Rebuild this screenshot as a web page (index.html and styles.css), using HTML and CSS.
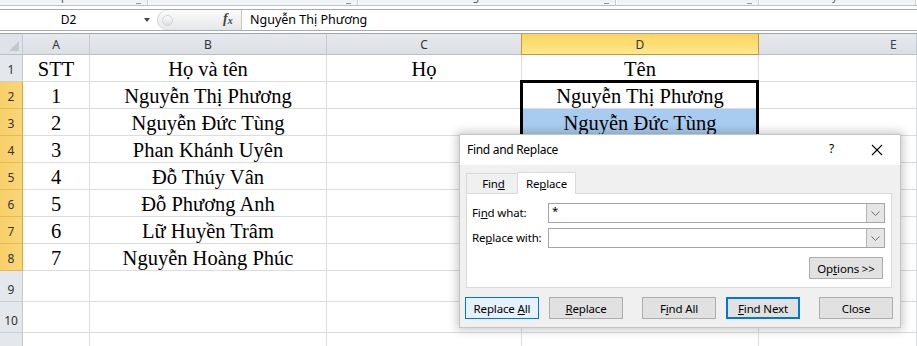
FILE: index.html
```html
<html>
<head>
<meta charset="UTF-8">
<title>Find and Replace</title>
<link rel="stylesheet" href="styles.css">
</head>
<body>

<div class="ribbon">
  <div class="group g1"><span>Clipboard</span><i class="launcher"></i></div>
  <div class="group g2"><span>Font</span><i class="launcher"></i></div>
  <div class="group g3"><span>Alignment</span><i class="launcher"></i></div>
  <div class="group g4"><span>Number</span><i class="launcher"></i></div>
  <div class="group g5"><span>Styles</span></div>
</div>

<div class="formula-bar">
  <div class="name-box"><span>D2</span><i class="caret"></i></div>
  <div class="fx-area"><span class="grip"></span><span class="fx">f<sub>x</sub></span></div>
  <div class="formula">Nguyễn Thị Phương</div>
</div>

<div class="sheet">
  <div class="corner"><i></i></div>
  <div class="ch">A</div>
  <div class="ch">B</div>
  <div class="ch">C</div>
  <div class="ch sel">D</div>
  <div class="ch e">E</div>

  <div class="rh">1</div>
  <div class="c">STT</div><div class="c">Họ và tên</div><div class="c">Họ</div><div class="c">Tên</div><div class="c"></div>

  <div class="rh sel">2</div>
  <div class="c">1</div><div class="c">Nguyễn Thị Phương</div><div class="c"></div><div class="c">Nguyễn Thị Phương</div><div class="c"></div>

  <div class="rh sel">3</div>
  <div class="c">2</div><div class="c">Nguyễn Đức Tùng</div><div class="c"></div><div class="c hl">Nguyễn Đức Tùng</div><div class="c"></div>

  <div class="rh sel">4</div>
  <div class="c">3</div><div class="c">Phan Khánh Uyên</div><div class="c"></div><div class="c hl">Phan Khánh Uyên</div><div class="c"></div>

  <div class="rh sel">5</div>
  <div class="c">4</div><div class="c">Đỗ Thúy Vân</div><div class="c"></div><div class="c hl">Đỗ Thúy Vân</div><div class="c"></div>

  <div class="rh sel">6</div>
  <div class="c">5</div><div class="c">Đỗ Phương Anh</div><div class="c"></div><div class="c hl">Đỗ Phương Anh</div><div class="c"></div>

  <div class="rh sel">7</div>
  <div class="c">6</div><div class="c">Lữ Huyền Trâm</div><div class="c"></div><div class="c hl">Lữ Huyền Trâm</div><div class="c"></div>

  <div class="rh sel">8</div>
  <div class="c">7</div><div class="c">Nguyễn Hoàng Phúc</div><div class="c"></div><div class="c hl">Nguyễn Hoàng Phúc</div><div class="c"></div>

  <div class="rh">9</div>
  <div class="c"></div><div class="c"></div><div class="c"></div><div class="c"></div><div class="c"></div>

  <div class="rh">10</div>
  <div class="c"></div><div class="c"></div><div class="c"></div><div class="c"></div><div class="c"></div>

  <div class="rh">11</div>
  <div class="c"></div><div class="c"></div><div class="c"></div><div class="c"></div><div class="c"></div>

  <div class="selection"></div>
</div>

<div class="dialog">
  <div class="dlg-title">
    <span class="dlg-name">Find and Replace</span>
    <span class="dlg-help">?</span>
    <svg class="dlg-close" width="12" height="12" viewBox="0 0 12 12"><path d="M1 1 L11 11 M11 1 L1 11" stroke="#000" stroke-width="1.1" fill="none"/></svg>
  </div>
  <div class="dlg-body">
    <div class="tabs">
      <div class="tab">Fin<u>d</u></div>
      <div class="tab active">Re<u>p</u>lace</div>
    </div>
    <div class="panel">
      <div class="fields">
        <label>Fi<u>n</u>d what:</label>
        <div class="combo"><span class="val">*</span><span class="drop"><svg width="9" height="5" viewBox="0 0 9 5"><path d="M0.5 0.5 L4.5 4.5 L8.5 0.5" stroke="#6a6a6a" fill="none"/></svg></span></div>
        <label>Re<u>p</u>lace with:</label>
        <div class="combo"><span class="val"></span><span class="drop"><svg width="9" height="5" viewBox="0 0 9 5"><path d="M0.5 0.5 L4.5 4.5 L8.5 0.5" stroke="#6a6a6a" fill="none"/></svg></span></div>
      </div>
      <div class="options-row"><button class="btn">Op<u>t</u>ions &gt;&gt;</button></div>
    </div>
    <div class="actions">
      <button class="btn default">Replace <u>A</u>ll</button>
      <button class="btn"><u>R</u>eplace</button>
      <button class="btn wide-gap">F<u>i</u>nd All</button>
      <button class="btn focus"><u>F</u>ind Next</button>
      <button class="btn wide-gap">Close</button>
    </div>
  </div>
</div>

</body>
</html>
```

FILE: styles.css
```css
body { margin: 0; width: 917px; height: 346px; overflow: hidden; position: relative; background: #fff;
       font-family: "Noto Sans", sans-serif; }

/* ribbon group labels, cut off at the top */
.ribbon        { display: flex; height: 5px; overflow: hidden; background: linear-gradient(#eef0f3, #f6f7f9);
                 border-bottom: 1px solid #b9bfc7; }
.ribbon .group { position: relative; border-right: 1px solid #c9ced5; box-shadow: 1px 0 0 #fff;
                 text-align: center; font-size: 11px; color: #555; }
.ribbon .group span { display: block; margin-top: -11px; line-height: 14px; }
.ribbon .g1    { width: 147px; }
.ribbon .g2    { width: 209px; }
.ribbon .g3    { width: 257px; }
.ribbon .g4    { width: 142px; }
.ribbon .g5    { width: 156px; }
.ribbon .launcher { position: absolute; right: 6px; top: 0; width: 5px; height: 3px; border-bottom: 1px solid #8d939a; }

/* formula bar */
.formula-bar { display: flex; height: 20px; margin-top: 3px; border-top: 1px solid #a6abb1; border-bottom: 1px solid #a6abb1; }
.name-box    { position: relative; width: 157px; font-size: 12px; line-height: 20px; color: #000; }
.name-box span { display: block; width: 137px; text-align: center; }
.name-box .caret { position: absolute; left: 144px; top: 8px; width: 0; height: 0;
                   border-left: 3px solid transparent; border-right: 3px solid transparent; border-top: 4px solid #444; }
.fx-area     { position: relative; width: 84px; background: linear-gradient(#fbfbfb, #e6e7e9);
               border-radius: 11px 0 0 11px; border-right: 1px solid #c2c5ca; box-shadow: inset 1px 0 0 #d0d3d7; }
.fx-area .grip { position: absolute; left: 5px; top: 5px; width: 9px; height: 9px; border-radius: 50%;
                 background: linear-gradient(#ffffff, #dcdde0); border: 1px solid #d0d2d5; }
.fx-area .fx { position: absolute; left: 66px; top: 1px; font: italic bold 14px "Liberation Serif", serif; color: #444; }
.fx-area .fx sub { font-size: 10px; vertical-align: -1px; }
.formula     { flex: 1; padding-left: 8px; font-size: 12.5px; line-height: 20px; color: #000; }

/* worksheet grid */
.sheet  { display: grid; position: relative; margin-top: 2px;
          grid-template-columns: 23px 67px 237px 195px 237px 1fr;
          grid-template-rows: 22px repeat(8, 27px) 31px 31px 31px; }
.corner { position: relative; background: #dfe3e8; border-top: 1px solid #9ea4ab; border-bottom: 1px solid #b9bfc7;
          border-right: 1px solid #c5cad1; }
.corner i { position: absolute; right: 3px; bottom: 3px; width: 0; height: 0;
            border-left: 10px solid transparent; border-bottom: 10px solid #c4c8ce; }
.ch     { background: linear-gradient(#e6e9ed, #dcdfe4); border-top: 1px solid #9ea4ab; border-bottom: 1px solid #b9bfc7;
          border-right: 1px solid #c5cad1; text-align: center; font-size: 12px; line-height: 21px; color: #333; }
.ch.sel { background: linear-gradient(#fbd461, #fee88c); border-right-color: #c8953b; border-bottom-color: #c8953b;
          box-shadow: -1px 0 0 #c8953b; }
.ch.e   { text-align: left; padding-left: 131px; color: #3c4250; }
.rh     { display: flex; align-items: flex-end; justify-content: center; padding-bottom: 4px; box-sizing: border-box;
          background: #e4e8ed; border-right: 1px solid #c5cad1; border-bottom: 1px solid #c9ced5;
          font-size: 12px; line-height: 14px; color: #333; }
.rh.sel { background: linear-gradient(90deg, #f8d06a, #f9d676); border-right-color: #e0a53c; border-bottom-color: #e6b857; }
.c      { box-sizing: border-box; padding-top: 3px; border-right: 1px solid #dadcdd; border-bottom: 1px solid #dadcdd;
          text-align: center; white-space: nowrap; overflow: hidden;
          font: 20.5px/23px "Liberation Serif", "Times New Roman", serif; color: #000; }
.c.hl   { background: #a8ccef; }
/* absolutely placed in the grid area D2:D8 so it stays out of auto-placement */
.selection { position: absolute; grid-column: 5 / 6; grid-row: 3 / 10; top: -2px; left: -2px; right: 0; bottom: 0;
             border: 3px solid #000; z-index: 2; }

/* find and replace dialog */
.dialog      { position: absolute; left: 459px; top: 134px; width: 442px; height: 194px; z-index: 5;
               background: #f0f0f0; border: 1px solid #c4c4c4; box-sizing: border-box;
               box-shadow: 0 0 9px 2px rgba(0, 0, 0, 0.22); font-size: 11.5px; letter-spacing: -0.15px; color: #000; }
.dlg-title   { position: relative; height: 30px; background: #fff; }
.dlg-name    { position: absolute; left: 7px; top: 6px; line-height: 18px; font-size: 12px; letter-spacing: -0.3px; }
.dlg-help    { position: absolute; left: 369px; top: 5px; line-height: 18px; font-size: 12px; }
.dlg-close   { position: absolute; left: 411px; top: 9px; }
.dlg-body    { padding: 7px 8px 0 6px; }
.tabs        { display: flex; height: 21px; align-items: flex-end; }
.tab         { width: 52px; height: 20px; box-sizing: border-box; padding-left: 3px; text-align: center; line-height: 19px;
               border: 1px solid #d9d9d9; border-bottom: none; background: #f0f0f0; }
.tab.active  { width: 58px; height: 22px; margin-bottom: -1px; padding: 1px 0 0 0; background: #fff; border-left: none;
               position: relative; z-index: 1; }
.panel       { height: 95px; box-sizing: border-box; background: #fff; border: 1px solid #d9d9d9; padding: 9px 6px 0 5px; }
.fields      { display: grid; grid-template-columns: 76px 1fr; row-gap: 5px; align-items: center; }
.fields label { line-height: 18px; white-space: nowrap; }
.combo       { display: flex; height: 20px; box-sizing: border-box; border: 1px solid #a5a5a5; }
.combo .val  { flex: 1; padding-left: 3px; line-height: 14px; }
.combo .drop { width: 17px; display: flex; align-items: center; justify-content: center;
               background: #e5e5e5; border-left: 1px solid #b5b5b5; }
.options-row { display: flex; justify-content: flex-end; margin-top: 9px; padding-right: 2px; }
.actions     { display: flex; margin-top: 9px; margin-left: -1px; }
.btn         { flex-shrink: 0; width: 74px; height: 22px; padding: 0; box-sizing: border-box;
               background: #e1e1e1; border: 1px solid #adadad; font: 11.5px "Noto Sans", sans-serif; letter-spacing: -0.15px; color: #000; }
.actions .btn { margin-right: 10px; }
.actions .btn:last-child { margin-right: 0; }
.actions .btn.wide-gap { margin-left: 9px; }
.btn.default { background: #e5f1fb; border-color: #0078d7; }
.btn.focus   { border: 2px solid #0078d7; }
u            { text-decoration: underline; text-underline-offset: 1px; }
```
